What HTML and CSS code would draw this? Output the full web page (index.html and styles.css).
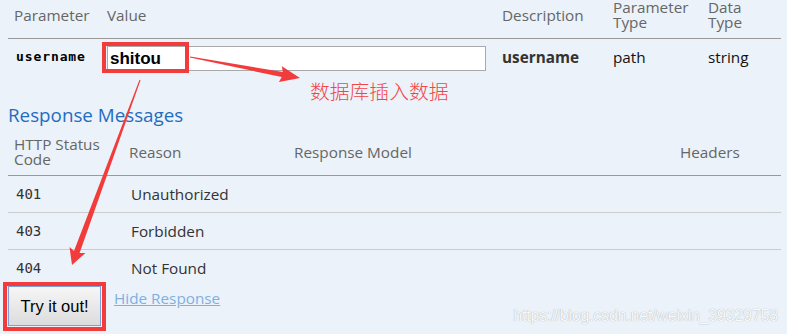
FILE: index.html
```html
<!DOCTYPE html>
<html>
<head>
<meta charset="utf-8">
<link rel="stylesheet" href="styles.css">
</head>
<body>
<div class="page">
  <table class="params">
    <colgroup>
      <col class="c1"><col class="c2"><col class="c3"><col class="c4"><col class="c5">
    </colgroup>
    <thead>
      <tr>
        <th>Parameter</th>
        <th>Value</th>
        <th>Description</th>
        <th>Parameter<br>Type</th>
        <th>Data<br>Type</th>
      </tr>
    </thead>
    <tbody>
      <tr>
        <td class="code bold">username</td>
        <td><input class="val" type="text" value="shitou"></td>
        <td class="desc">username</td>
        <td class="plain">path</td>
        <td class="plain">string</td>
      </tr>
    </tbody>
  </table>

  <h4 class="resp-title">Response Messages</h4>

  <table class="responses">
    <colgroup>
      <col class="r1"><col class="r2"><col class="r3"><col class="r4">
    </colgroup>
    <thead>
      <tr>
        <th>HTTP Status<br>Code</th>
        <th>Reason</th>
        <th>Response Model</th>
        <th>Headers</th>
      </tr>
    </thead>
    <tbody>
      <tr><td class="code">401</td><td>Unauthorized</td><td></td><td></td></tr>
      <tr><td class="code">403</td><td>Forbidden</td><td></td><td></td></tr>
      <tr class="last"><td class="code">404</td><td>Not Found</td><td></td><td></td></tr>
    </tbody>
  </table>

  <div class="actions">
    <button class="try">Try it out!</button>
    <a class="hide" href="#">Hide Response</a>
  </div>

  <div class="note">数据库插入数据</div>
  <div class="watermark">https://blog.csdn.net/weixin_39329758</div>

  <svg class="marks" width="787" height="334" viewBox="0 0 787 334">
    <rect x="104" y="44" width="83" height="27" fill="none" stroke="#f23b3b" stroke-width="4"/>
    <rect x="5" y="284" width="99" height="45" fill="none" stroke="#f23b3b" stroke-width="4"/>
    <polygon fill="#f23b3b" points="190.1,56.5 282.8,72.1 281.9,66.3 300,78 278.9,82.1 281.8,77.1 189.9,57.5"/>
    <polygon fill="#f23b3b" points="140.5,80.2 79.6,252.9 85.5,252.9 72,265 69.5,247.1 74,250.9 139.5,79.8"/>
  </svg>
</div>
</body>
</html>
```

FILE: styles.css
```css
html, body {
  margin: 0;
  padding: 0;
  background: #ebf2f9;
}

.page {
  position: relative;
  width: 787px;
  height: 334px;
  padding: 0 6px 0 8px;
  box-sizing: border-box;
  font-family: "Open Sans", "Noto Sans", sans-serif;
  font-size: 15.3px;
  color: #333;
  overflow: hidden;
}

table {
  border-collapse: collapse;
  table-layout: fixed;
  width: 773px;
}

th {
  font-weight: normal;
  text-align: left;
  color: #666;
  line-height: 15px;
  vertical-align: middle;
  padding: 0 6px 8px 6px;
  border-bottom: 1px solid #9a9a9a;
}

.params col.c1 { width: 93px; }
.params col.c2 { width: 395px; }
.params col.c3 { width: 111px; }
.params col.c4 { width: 95px; }
.params col.c5 { width: 79px; }

.params td {
  padding: 7px 6px 7px 6px;
  vertical-align: top;
  line-height: 20px;
}

.params td.code,
.params td.desc,
.params td.plain {
  padding-top: 8px;
}

.params td.code { padding-left: 8px; }

.code {
  font-family: "DejaVu Sans Mono", "Liberation Mono", monospace;
  font-size: 14px;
  color: #000;
}

.bold {
  font-weight: bold;
  font-size: 13px;
  letter-spacing: 0.9px;
}

.val {
  display: block;
  box-sizing: border-box;
  width: 379px;
  height: 25px;
  margin: 0;
  padding: 0 0 0 2px;
  border: 1px solid #a9a9a9;
  background: #fff;
  font-family: "Liberation Sans", Arial, sans-serif;
  font-weight: bold;
  font-size: 17px;
  color: #000;
}

.desc {
  font-weight: bold;
  color: #333;
}

.plain { color: #111; }

.resp-title {
  margin: 25px 0 10px 0;
  font-weight: normal;
  font-size: 18.8px;
  line-height: 24px;
  color: #1f6dbf;
}

.responses col.r1 { width: 115px; }
.responses col.r2 { width: 165px; }
.responses col.r3 { width: 386px; }
.responses col.r4 { width: 107px; }

.responses td {
  padding: 8px 6px 8px 8px;
  line-height: 20px;
  border-bottom: 1px solid #cccccc;
  color: #333;
}

.responses tr.last td { border-bottom: none; }

.actions {
  display: flex;
  align-items: flex-start;
  gap: 13px;
}

.try {
  box-sizing: border-box;
  width: 93px;
  height: 40px;
  margin: 0;
  padding: 0;
  border: 1px solid #7c9fdc;
  background: linear-gradient(#f6f6f6, #dcdcdc);
  font-family: "Liberation Sans", Arial, sans-serif;
  font-size: 16.5px;
  color: #000;
}

.hide {
  margin-top: 2px;
  line-height: 20px;
  color: #7fb0e0;
  text-decoration: underline;
}

.note {
  position: absolute;
  left: 310px;
  top: 79px;
  font-family: "Noto Sans CJK SC", sans-serif;
  font-size: 19.8px;
  line-height: 24px;
  color: #f24646;
  font-weight: 300;
}

.watermark {
  position: absolute;
  right: 9px;
  top: 306px;
  font-family: "Liberation Sans", Arial, sans-serif;
  font-size: 16px;
  line-height: 20px;
  color: #f7f9fb;
  text-shadow: 0 0 1px rgba(0, 0, 0, 0.35);
  letter-spacing: -0.2px;
}

.marks {
  position: absolute;
  left: 0;
  top: 0;
  pointer-events: none;
}
```
